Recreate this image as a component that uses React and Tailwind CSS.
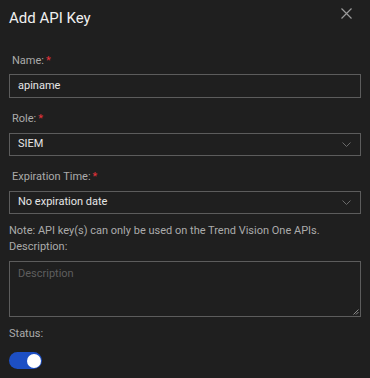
import React from "react";

function Label({ children, required, indent }) {
  return (
    <div className={`text-[11px] leading-[16px] text-[#ababab] ${indent ? "pl-[3px]" : ""}`}>
      {children}
      {required && <span className="text-[#e5333b] ml-[2px]">*</span>}
    </div>
  );
}

function Chevron() {
  return (
    <svg width="9" height="6" viewBox="0 0 9 6" className="text-[#6a6a6a]">
      <path d="M0.5 0.5 L4.5 4.5 L8.5 0.5" fill="none" stroke="currentColor" strokeWidth="1" />
    </svg>
  );
}

function Select({ value }) {
  return (
    <div className="h-[23px] border border-[#5c5c5c] flex items-center justify-between pl-[8px] pr-[9px] text-[11px] text-[#e6e6e6]">
      <span>{value}</span>
      <Chevron />
    </div>
  );
}

export default function App() {
  return (
    <div
      className="w-[370px] h-[378px] bg-[#1f1f1f] px-[9px] overflow-hidden"
      style={{ fontFamily: "Roboto, 'Noto Sans', sans-serif" }}
    >
      <div className="flex justify-between items-start pt-[8px]">
        <div className="text-[15px] leading-[20px] font-normal text-[#f0f0f0]">Add API Key</div>
        <svg width="11" height="11" viewBox="0 0 11 11" className="mt-[0px] mr-[9px] text-[#9a9a9a]">
          <path d="M0.5 0.5 L10.5 10.5 M10.5 0.5 L0.5 10.5" stroke="currentColor" strokeWidth="1.2" />
        </svg>
      </div>

      <div className="mt-[25px]">
        <Label required indent>Name:</Label>
        <div className="mt-[5px] h-[24px] border border-[#5c5c5c] flex items-center pl-[8px] text-[11px] text-[#e6e6e6]">
          apiname
        </div>
      </div>

      <div className="mt-[13px]">
        <Label required indent>Role:</Label>
        <div className="mt-[6px]">
          <Select value="SIEM" />
        </div>
      </div>

      <div className="mt-[13px]">
        <Label required indent>Expiration Time:</Label>
        <div className="mt-[6px]">
          <Select value="No expiration date" />
        </div>
      </div>

      <div className="mt-[9px] text-[11px] leading-[16px] text-[#ababab]">
        Note: API key(s) can only be used on the Trend Vision One APIs.
      </div>
      <Label>Description:</Label>

      <div className="mt-[6px] h-[56px] border border-[#5c5c5c] relative">
        <div className="pl-[8px] pt-[4px] text-[11px] leading-[16px] text-[#5e5e5e]">Description</div>
        <svg width="6" height="6" viewBox="0 0 6 6" className="absolute right-[1px] bottom-[1px] text-[#8a8a8a]">
          <path d="M5.5 0.5 L0.5 5.5 M5.5 3 L3 5.5" stroke="currentColor" strokeWidth="1" />
        </svg>
      </div>

      <div className="mt-[9px]">
        <Label>Status:</Label>
      </div>

      <div className="mt-[10px] w-[33px] h-[17px] rounded-full bg-[#1d4fc4] flex items-center justify-end pr-[1.5px]">
        <div className="w-[14px] h-[14px] rounded-full bg-white" />
      </div>
    </div>
  );
}
